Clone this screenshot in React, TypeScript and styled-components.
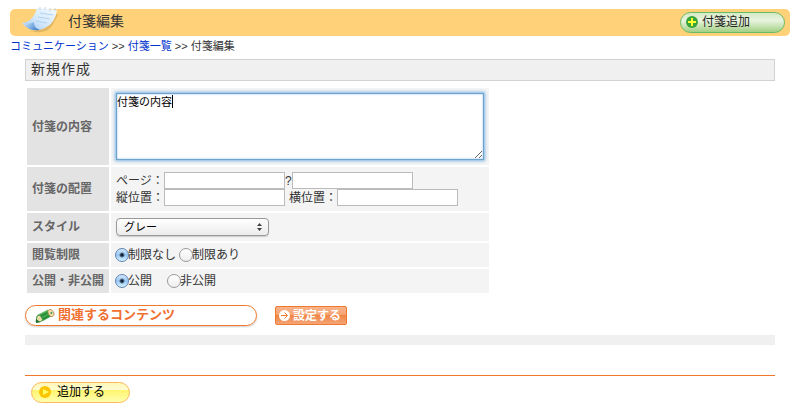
import React from "react";
import styled, { createGlobalStyle } from "styled-components";

const Global = createGlobalStyle`
  * { box-sizing: border-box; }
  body {
    margin: 0;
    background: #fff;
    color: #333;
    font-family: "Liberation Sans", "Noto Sans CJK JP", sans-serif;
    font-size: 12px;
    line-height: 18px;
  }
  button, input, select, textarea { font: inherit; margin: 0; }
`;

const Page = styled.div`
  padding: 9px 14px 13px 10px;
`;

const Header = styled.header`
  display: flex;
  align-items: center;
  height: 27px;
  padding: 0 5px 0 11px;
  border-radius: 5px;
  background: #ffd279;
`;

const NoteIcon = styled.svg`
  width: 40px;
  height: 30px;
  margin: -6px 7px 0 0;
`;

const Title = styled.h1`
  flex: 1;
  margin: 0;
  font-size: 14px;
  line-height: 24px;
  font-weight: 400;
  padding-bottom: 4px;
`;

const Button = styled.button`
  display: flex;
  align-items: center;
  cursor: pointer;
`;

const AddNoteButton = styled(Button)`
  width: 105px;
  height: 21px;
  padding: 0 5px 1px;
  gap: 4px;
  border: 1px solid #68ba68;
  border-radius: 11px;
  background: linear-gradient(#d5ebc5, #e9f3df 40%, #a2d184);
  color: #222;
`;

const SubmitButton = styled(Button)`
  width: 99px;
  height: 21px;
  padding: 0 7px 1px;
  gap: 6px;
  border: 1px solid #fbb95a;
  border-radius: 11px;
  background: linear-gradient(#fff7b8, #fffbd0 35%, #fff46a 36%, #ffffb0);
  color: #000;
`;

const SettingButton = styled(Button)`
  width: 72px;
  height: 19px;
  padding: 0 3px;
  gap: 3px;
  border: 1px solid #ee782d;
  border-radius: 2px;
  background: linear-gradient(#f8b48c, #f6a26f 45%, #f08545 50%, #f5a577);
  color: #fff;
  font-weight: 700;
  white-space: nowrap;
`;

const Icon = styled.svg<{ $size: number }>`
  flex: none;
  width: ${(p) => p.$size}px;
  height: ${(p) => p.$size}px;
`;

const Breadcrumb = styled.nav`
  padding-top: 1px;
  font-size: 11px;
  a { color: #03c; text-decoration: none; }
`;

const Content = styled.main`
  margin: 4px 15px 0;
`;

const SectionTitle = styled.h2`
  height: 22px;
  margin: 0 0 5px;
  padding: 0 5px;
  border: 1px solid #d2d2d2;
  background: #f0f0f0;
  font-size: 14px;
  line-height: 18px;
  font-weight: 400;
  letter-spacing: 1px;
`;

const FormTable = styled.table`
  width: 466px;
  border-spacing: 2px;
  table-layout: fixed;
`;

const Row = styled.tr<{ $height: number }>`
  height: ${(p) => p.$height}px;
`;

const HeadCell = styled.th`
  width: 82px;
  padding: 0 5px;
  background: #e3e3e3;
  color: #666;
  text-align: left;
  white-space: nowrap;
`;

const Cell = styled.td`
  padding: 0 5px;
  background: #f4f4f4;
`;

const Line = styled.div<{ $gap?: number }>`
  display: flex;
  align-items: center;
  gap: ${(p) => p.$gap ?? 0}px;
`;

const Editor = styled.div`
  position: relative;
  display: flex;
`;

const TextArea = styled.textarea`
  width: 100%;
  height: 67px;
  padding: 0;
  border: 1px solid #6ea3cd;
  outline: 0;
  box-shadow: 0 0 3px 1px #7db4e3, inset 0 0 2px #7db4e3;
  background: #fff;
  color: #000;
  font-size: 11px;
  line-height: 16px;
  resize: both;
`;

const Caret = styled.span`
  position: absolute;
  left: 56px;
  top: 2px;
  width: 1px;
  height: 13px;
  background: #000;
`;

const FieldRow = styled(Line)`
  height: 17px;
`;

const FieldLabel = styled.label`
  width: 48px;
  white-space: nowrap;
`;

const TextInput = styled.input`
  width: 121px;
  height: 17px;
  padding: 0 2px;
  border: 1px solid #bbb;
  background: #fff;
`;

const Spacer = styled.span`
  width: 4px;
`;

const SelectBox = styled.div`
  display: grid;
  width: 153px;
  align-items: center;
  > * { grid-area: 1 / 1; }
`;

const Select = styled.select`
  appearance: none;
  height: 18px;
  padding: 0 7px;
  border: 1px solid #999;
  border-radius: 4px;
  background: linear-gradient(#fff, #f5f5f5 50%, #ececec);
  box-shadow: 0 1px 1px #ccc;
  color: #000;
  font-size: 11px;
  line-height: 16px;
`;

const SelectArrow = styled.svg`
  justify-self: end;
  width: 5px;
  height: 8px;
  margin-right: 7px;
  pointer-events: none;
`;

const RadioLabel = styled.label`
  display: flex;
  align-items: center;
`;

const Radio = styled.input`
  appearance: none;
  width: 14px;
  height: 14px;
  margin: 0 -1px;
  border: 1px solid #999;
  border-radius: 50%;
  background: linear-gradient(#fff, #eee);

  &:checked {
    border-color: #5d83b0;
    background: radial-gradient(circle, #102030 0 1px, transparent 3px),
      linear-gradient(#d5e8fb, #96c6f4 50%, #d8f4ff);
  }
`;

const Related = styled.section`
  display: flex;
  align-items: center;
  gap: 18px;
  margin: 10px 0 9px;
`;

const RelatedTitle = styled.h3`
  display: flex;
  align-items: center;
  width: 232px;
  height: 21px;
  margin: 0;
  padding: 0 9px 2px;
  gap: 3px;
  border: 1px solid #f07828;
  border-radius: 11px;
  box-shadow: 0 1px 2px #ccc;
  color: #f07030;
  font-size: 13px;
  line-height: 16px;
  font-weight: 700;
`;

const Pencil = styled.svg`
  width: 20px;
  height: 16px;
  margin-top: 2px;
`;

const Band = styled.div`
  height: 10px;
  background: #f0f0f0;
`;

const Footer = styled.footer`
  margin-top: 30px;
  padding: 6px;
  border-top: 1px solid #f07828;
`;

export default function App() {
  return (
    <>
      <Global />
      <Page>
        <Header>
          <NoteIcon viewBox="0 0 40 30" aria-hidden="true">
            <defs>
              <linearGradient id="paper" x1="0" y1="1" x2="1" y2="0">
                <stop offset="0.1" stopColor="#a6ccf3" />
                <stop offset="0.45" stopColor="#d4e8fb" />
                <stop offset="1" stopColor="#f3faff" />
              </linearGradient>
              <linearGradient id="curl" x1="0" y1="0" x2="1" y2="0.4">
                <stop offset="0" stopColor="#e6f3ff" />
                <stop offset="0.6" stopColor="#84b4e6" />
                <stop offset="1" stopColor="#4f86cc" />
              </linearGradient>
            </defs>
            <path d="M10 26 Q24 30 31 21 L37 10 L35 9 L18 25Z" fill="#c99c4e" opacity=".5" />
            <path d="M16 3 L36 5 Q34 17 27 21 Q22 25 16 25 Q9 24 1 18 Q12 17 16 3Z" fill="url(#paper)" />
            <path d="M1 18 Q8 20 13 17 Q12 22 19 25 Q8 27 1 18Z" fill="url(#curl)" />
            <path d="M19 8 L32 10 M17 12 L29 14 M15 16 L26 18" stroke="#b2d2f0" fill="none" />
            <path d="M19 2v3M24 2v3M29 3v3M34 3v3" stroke="#c5d4df" fill="none" />
          </NoteIcon>
          <Title>付箋編集</Title>
          <AddNoteButton type="button">
            <Icon $size={12} viewBox="0 0 12 12" aria-hidden="true">
              <circle cx="6" cy="6" r="6" fill="#39a539" />
              <path d="M6 2v8M2 6h8" stroke="#ff3" strokeWidth="2" />
            </Icon>
            付箋追加
          </AddNoteButton>
        </Header>
        <Breadcrumb aria-label="breadcrumb">
          <a href="#communication">コミュニケーション</a> &gt;&gt; <a href="#list">付箋一覧</a> &gt;&gt; 付箋編集
        </Breadcrumb>
        <Content>
          <SectionTitle>新規作成</SectionTitle>
          <FormTable>
            <tbody>
              <Row $height={77}>
                <HeadCell scope="row"><label htmlFor="body">付箋の内容</label></HeadCell>
                <Cell>
                  <Editor>
                    <TextArea id="body" defaultValue="付箋の内容" />
                    <Caret />
                  </Editor>
                </Cell>
              </Row>
              <Row $height={44}>
                <HeadCell scope="row">付箋の配置</HeadCell>
                <Cell>
                  <FieldRow>
                    <FieldLabel htmlFor="page">ページ：</FieldLabel>
                    <TextInput id="page" />?
                    <TextInput aria-label="ページ終了" />
                  </FieldRow>
                  <FieldRow>
                    <FieldLabel htmlFor="top">縦位置：</FieldLabel>
                    <TextInput id="top" />
                    <Spacer />
                    <FieldLabel htmlFor="left">横位置：</FieldLabel>
                    <TextInput id="left" />
                  </FieldRow>
                </Cell>
              </Row>
              <Row $height={28}>
                <HeadCell scope="row"><label htmlFor="style">スタイル</label></HeadCell>
                <Cell>
                  <SelectBox>
                    <Select id="style" defaultValue="gray">
                      <option value="gray">グレー</option>
                    </Select>
                    <SelectArrow viewBox="0 0 5 8" aria-hidden="true">
                      <path d="M0 3L2.5 0L5 3ZM0 5L2.5 8L5 5Z" fill="#444" />
                    </SelectArrow>
                  </SelectBox>
                </Cell>
              </Row>
              <Row $height={24}>
                <HeadCell scope="row">閲覧制限</HeadCell>
                <Cell>
                  <Line $gap={4}>
                    <RadioLabel><Radio type="radio" name="limit" defaultChecked />制限なし</RadioLabel>
                    <RadioLabel><Radio type="radio" name="limit" />制限あり</RadioLabel>
                  </Line>
                </Cell>
              </Row>
              <Row $height={24}>
                <HeadCell scope="row">公開・非公開</HeadCell>
                <Cell>
                  <Line $gap={16}>
                    <RadioLabel><Radio type="radio" name="open" defaultChecked />公開</RadioLabel>
                    <RadioLabel><Radio type="radio" name="open" />非公開</RadioLabel>
                  </Line>
                </Cell>
              </Row>
            </tbody>
          </FormTable>
          <Related>
            <RelatedTitle>
              <Pencil viewBox="0 0 20 16" aria-hidden="true">
                <path d="M1 14 L2 8 L5 6 L13 2 L17 8 L8 13Z" fill="#3aa648" />
                <path d="M4 9 L14 4 M6 12 L16 7" stroke="#247a35" strokeWidth="1" />
                <path d="M3 7 L13 2" stroke="#6fc26a" />
                <path d="M1 14 L2 8 L5 7 L8 12 L5 14Z" fill="#e9dca6" stroke="#2b8a3c" strokeWidth=".8" />
                <path d="M1 15 L1 11 L5 14Z" fill="#1f6b2d" />
                <ellipse cx="16" cy="5" rx="2.6" ry="3.8" transform="rotate(-28 16 5)" fill="#f3dfae" stroke="#b58a4c" strokeWidth=".8" />
                <circle cx="16.4" cy="5" r="1" fill="#37964a" />
              </Pencil>
              関連するコンテンツ
            </RelatedTitle>
            <SettingButton type="button">
              <Icon $size={11} viewBox="0 0 11 11" aria-hidden="true">
                <circle cx="5.5" cy="5.5" r="5.5" fill="#fff" />
                <path d="M2 5.5h6M5.5 2.5l3 3l-3 3" stroke="#ee782d" fill="none" />
              </Icon>
              設定する
            </SettingButton>
          </Related>
          <Band />
          <Footer>
            <SubmitButton type="button">
              <Icon $size={12} viewBox="0 0 12 12" aria-hidden="true">
                <circle cx="6" cy="6" r="6" fill="#ffc400" />
                <path d="M4 3L10 6L4 9Z" fill="#ff6" />
              </Icon>
              追加する
            </SubmitButton>
          </Footer>
        </Content>
      </Page>
    </>
  );
}
